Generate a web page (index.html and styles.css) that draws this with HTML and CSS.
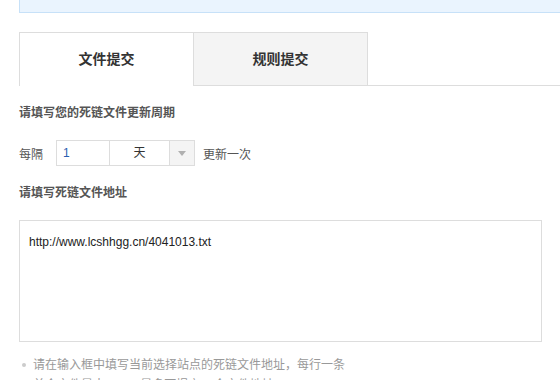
FILE: index.html
```html
<!DOCTYPE html>
<html lang="zh-CN">
<head>
    <meta charset="UTF-8">
    <title>死链提交</title>
    <link rel="stylesheet" href="styles.css">
</head>
<body>
    <div class="notice"></div>

    <div class="tabs">
        <div class="tab active">文件提交</div>
        <div class="tab">规则提交</div>
    </div>

    <div class="section">
        <h3 class="field-title">请填写您的死链文件更新周期</h3>
        <div class="period-row">
            <span class="period-label">每隔</span>
            <div class="period-group">
                <input type="text" class="period-input" value="1">
                <div class="period-select">
                    <span class="select-value">天</span>
                    <span class="select-arrow"></span>
                </div>
            </div>
            <span class="period-label after">更新一次</span>
        </div>

        <h3 class="field-title">请填写死链文件地址</h3>
        <div class="url-box">http://www.lcshhgg.cn/4041013.txt</div>

        <ul class="tips">
            <li>请在输入框中填写当前选择站点的死链文件地址，每行一条</li>
            <li>单个文件最大10M，最多可提交10个文件地址</li>
        </ul>
    </div>
</body>
</html>
```

FILE: styles.css
```css
body, h3, ul {
    margin: 0;
    padding: 0;
}

body {
    font-family: "Liberation Sans", Arial, "Noto Sans CJK SC", sans-serif;
    font-size: 12px;
    color: #555;
    background-color: #fff;
    padding-left: 19px;
}

/* top notice bar */
.notice {
    height: 12px;
    background-color: #eaf4fe;
    border: 1px solid #c7e1f8;
    border-top: none;
    border-right: none;
}

/* tabs */
.tabs {
    display: flex;
    align-items: flex-start;
    margin-top: 19px;
    border-bottom: 1px solid #ddd;
}

.tab {
    box-sizing: border-box;
    width: 175px;
    height: 53px;
    line-height: 52px;
    text-align: center;
    font-size: 14px;
    font-weight: bold;
    color: #333;
    background-color: #f4f4f4;
    border: 1px solid #ddd;
    border-bottom: none;
}

.tab + .tab {
    margin-left: -1px;
}

.tab.active {
    height: 54px;
    margin-bottom: -1px;
    background-color: #fff;
}

/* form */
.section {
    padding-top: 17px;
}

.field-title {
    font-size: 12px;
    font-weight: bold;
    line-height: 20px;
    color: #555;
}

.period-row {
    display: flex;
    align-items: center;
    margin: 17px 0;
}

.period-label {
    margin-right: 13px;
}

.period-label.after {
    margin-left: 8px;
    margin-right: 0;
}

.period-group {
    display: flex;
    height: 26px;
    box-sizing: border-box;
    border: 1px solid #ddd;
}

.period-input {
    box-sizing: border-box;
    width: 53px;
    height: 24px;
    padding: 0 6px;
    border: none;
    border-right: 1px solid #ddd;
    outline: none;
    font-family: "Liberation Sans", Arial, sans-serif;
    font-size: 12px;
    color: #2a5db0;
}

.period-select {
    display: flex;
    height: 24px;
}

.select-value {
    width: 59px;
    line-height: 24px;
    text-align: center;
    color: #333;
    border-right: 1px solid #ddd;
}

.select-arrow {
    position: relative;
    width: 24px;
    background-color: #f4f4f4;
}

.select-arrow::after {
    content: "";
    position: absolute;
    left: 8px;
    top: 10px;
    border-left: 4px solid transparent;
    border-right: 4px solid transparent;
    border-top: 5px solid #b0b0b0;
}

.url-box {
    box-sizing: border-box;
    width: 523px;
    height: 122px;
    margin-top: 17px;
    padding: 12px 9px;
    border: 1px solid #ddd;
    line-height: 18px;
    color: #222;
}

.tips {
    list-style: none;
    margin-top: 13px;
    color: #999;
}

.tips li {
    position: relative;
    padding-left: 14px;
    line-height: 20px;
}

.tips li::before {
    content: "";
    position: absolute;
    left: 3px;
    top: 8px;
    width: 4px;
    height: 4px;
    border-radius: 50%;
    background-color: #ccc;
}
```
